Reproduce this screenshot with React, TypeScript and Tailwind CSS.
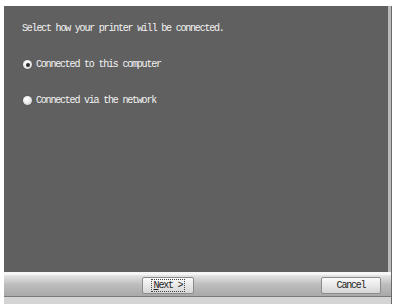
const mono = { fontFamily: '"Liberation Mono", "DejaVu Sans Mono", monospace' };

function Radio({ checked }: { checked: boolean }) {
  return (
    <span className="flex h-[9px] w-[9px] shrink-0 items-center justify-center rounded-full bg-[radial-gradient(circle_at_40%_35%,#ffffff,#e8e8e8_55%,#b8b8b8)] shadow-[0_0_1px_#2a2a2a]">
      {checked && <span className="h-[4px] w-[4px] rounded-full bg-[#2e2e2e]" />}
    </span>
  );
}

export default function App() {
  return (
    <div className="h-[304px] w-[395px] overflow-hidden bg-white pl-[4px] pr-[3px] pt-[6px]">
      <div className="flex h-full flex-col border-r border-[#6a6a6a]">
        {/* Content */}
        <div className="flex h-[266px] border-r-[3px] border-[#b9b9b9] bg-[#606060]">
          <div className="flex flex-1 flex-col px-[18px] pt-[17px] text-[10px] leading-[11px] tracking-[-1.2px] text-[#f4f4f4]" style={mono}>
            <p>Select how your printer will be connected.</p>

            <div className="mt-[25px] flex items-center gap-[4px] pl-[1px]">
              <Radio checked />
              <span>Connected to this computer</span>
            </div>

            <div className="mt-[25px] flex items-center gap-[4px] pl-[1px]">
              <Radio checked={false} />
              <span>Connected via the network</span>
            </div>
          </div>
        </div>

        {/* Bottom bar */}
        <div className="h-[3px] bg-[#f6f6f6]" />
        <div className="flex h-[21px] items-center bg-[linear-gradient(#e6e6e6,#bdbdbd_45%,#a9a9a9)] pr-[7px]">
          <div className="ml-[138px] flex h-[17px] w-[52px] items-center justify-center rounded-[2px] border border-[#8c8c8c] bg-[linear-gradient(#fafafa,#d6d6d6)]">
            <span className="border border-dotted border-[#444] px-[2px] text-[10px] leading-[11px] tracking-[-1.2px] text-[#222]" style={mono}>
              <span className="underline">N</span>ext &gt;
            </span>
          </div>
          <div className="ml-auto mr-[3px] flex h-[17px] w-[60px] items-center justify-center rounded-[2px] border border-[#8c8c8c] bg-[linear-gradient(#fafafa,#d6d6d6)] text-[10px] leading-[11px] tracking-[-1.2px] text-[#222]" style={mono}>
            Cancel
          </div>
        </div>
        <div className="h-[1px] bg-[#7a7a7a]" />
        <div className="flex-1 bg-[#d4d4d4]" />
      </div>
    </div>
  );
}
